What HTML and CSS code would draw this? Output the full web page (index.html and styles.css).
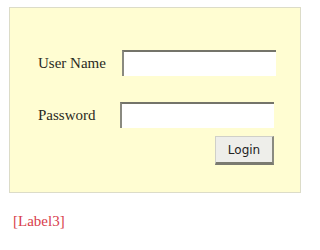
FILE: index.html
```html
<!DOCTYPE html>
<html>
<head>
    <meta charset="utf-8">
    <title>Login</title>
    <link rel="stylesheet" href="styles.css">
</head>
<body>
    <div class="login-box">
        <div class="row">
            <label class="caption">User Name</label>
            <input class="field" type="text">
        </div>
        <div class="row second">
            <label class="caption">Password</label>
            <input class="field" type="password">
        </div>
        <div class="actions">
            <button class="login">Login</button>
        </div>
    </div>
    <div class="message">[Label3]</div>
</body>
</html>
```

FILE: styles.css
```css
html,
body {
    margin: 0;
    padding: 0;
    background: #fff;
}

body {
    font-family: "Liberation Serif", "Times New Roman", serif;
    padding: 7px 0 0 9px;
}

.login-box {
    width: 292px;
    height: 186px;
    box-sizing: border-box;
    background-color: #fffdd2;
    border: 1px solid #dcdcc8;
    padding: 42px 0 0 28px;
}

.row {
    display: flex;
    align-items: center;
    height: 26px;
}

.row.second {
    margin-top: 26px;
}

.caption {
    font-size: 15px;
    color: #2a2a1e;
    width: 84px;
}

.row.second .caption {
    width: 82px;
}

.field {
    width: 154px;
    height: 26px;
    box-sizing: border-box;
    margin: 0;
    padding: 0;
    background: #fff;
    border: none;
    border-top: 2px solid #74746a;
    border-left: 2px solid #8a8a80;
}

.actions {
    display: flex;
    justify-content: flex-end;
    width: 236px;
    margin-top: 8px;
}

.login {
    width: 59px;
    height: 29px;
    box-sizing: border-box;
    padding: 0;
    font-family: "DejaVu Sans", Tahoma, sans-serif;
    font-size: 12px;
    color: #222;
    background: #eeeeea;
    border: 1px solid #d0d0c8;
    border-right: 2px solid #8a8a80;
    border-bottom: 3px solid #7a7a70;
}

.message {
    margin: 20px 0 0 4px;
    font-size: 15px;
    color: #d8404c;
}
```
